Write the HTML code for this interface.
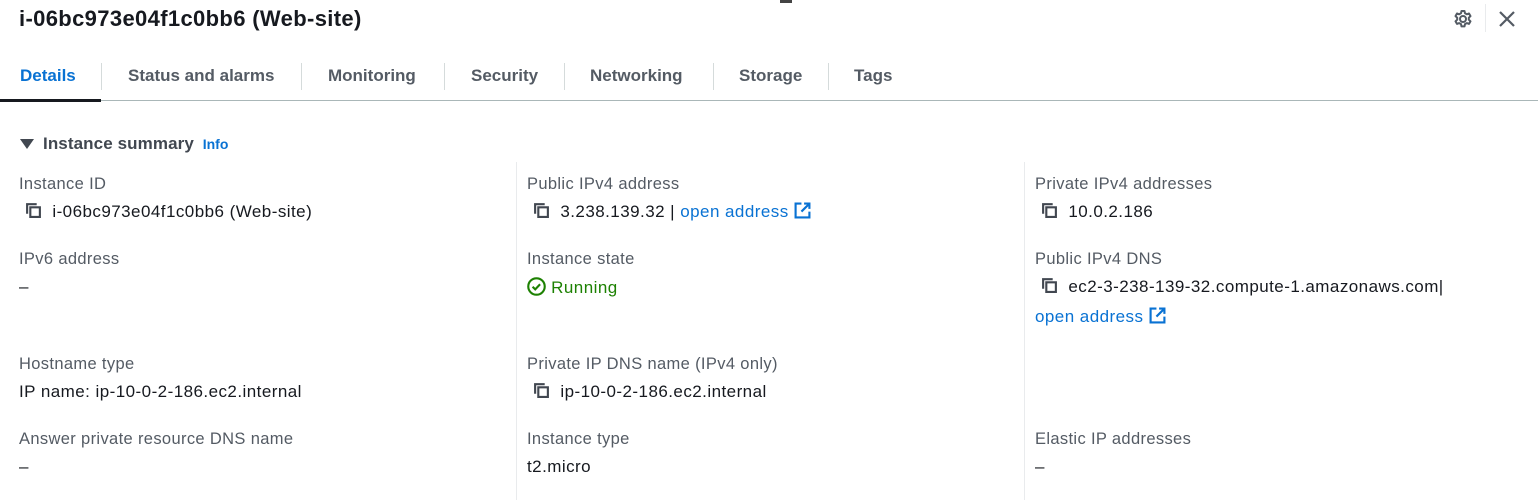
<!DOCTYPE html>
<html><head><meta charset="utf-8"><style>
body{margin:0;width:1538px;height:500px;background:#fff;font-family:"Liberation Sans",sans-serif;color:#16191f;position:relative;overflow:hidden}
.a{position:absolute;white-space:nowrap}
.lbl{font-size:16.5px;color:#545b64;letter-spacing:0.35px}
.val{font-size:17px;color:#16191f;letter-spacing:0.45px}
.tab{font-size:17px;font-weight:bold;color:#545b64;top:66px}
.sep{position:absolute;top:63px;width:1px;height:27px;background:#d5dbdb}
.vs{position:absolute;top:162px;width:1px;height:338px;background:#e9ebed}
.link{color:#0972d3}
svg{vertical-align:-2px}
</style></head><body>
<div class="a" style="left:780px;top:0;width:12px;height:3px;background:#444"></div>
<div class="a" style="left:19px;top:6px;font-size:22px;font-weight:bold;letter-spacing:0.35px">i-06bc973e04f1c0bb6 (Web-site)</div>
<svg class="a" style="left:1453px;top:9px" width="20" height="20" viewBox="0 0 20 20"><circle cx="10" cy="10" r="3" fill="none" stroke="#545b64" stroke-width="2"/><path d="M8.5 2h3l.5 2.3 1.8 1 2.2-.8 1.5 2.6-1.7 1.6v2l1.7 1.6-1.5 2.6-2.2-.8-1.8 1-.5 2.3h-3l-.5-2.3-1.8-1-2.2.8-1.5-2.6 1.7-1.6v-2L2.5 7.1 4 4.5l2.2.8 1.8-1z" fill="none" stroke="#545b64" stroke-width="2" stroke-linejoin="round"/></svg>
<div class="a" style="left:1485px;top:4px;width:1px;height:28px;background:#e9ebed"></div>
<svg class="a" style="left:1497px;top:9px" width="20" height="20" viewBox="0 0 20 20"><path d="M3 3l14 14M17 3L3 17" stroke="#545b64" stroke-width="2.2"/></svg>
<div class="a tab" style="left:20px;color:#0972d3">Details</div>
<div class="sep" style="left:101px"></div>
<div class="a tab" style="left:128px">Status and alarms</div>
<div class="sep" style="left:301px"></div>
<div class="a tab" style="left:328px">Monitoring</div>
<div class="sep" style="left:444px"></div>
<div class="a tab" style="left:471px">Security</div>
<div class="sep" style="left:564px"></div>
<div class="a tab" style="left:590px">Networking</div>
<div class="sep" style="left:713px"></div>
<div class="a tab" style="left:739px">Storage</div>
<div class="sep" style="left:828px"></div>
<div class="a tab" style="left:854px">Tags</div>
<div class="a" style="left:0;top:100px;width:1538px;height:1px;background:#aab7b8"></div>
<div class="a" style="left:0;top:99px;width:101px;height:3px;background:#16191f"></div>
<svg class="a" style="left:20px;top:139px" width="14" height="11" viewBox="0 0 14 11"><path d="M0 0h14L7 10z" fill="#414750"/></svg>
<div class="a" style="left:43px;top:134px;font-size:17px;font-weight:bold;color:#414750;letter-spacing:0.1px">Instance summary <span style="font-size:14px;color:#0972d3;margin-left:4px;letter-spacing:0">Info</span></div>
<div class="vs" style="left:516px"></div><div class="vs" style="left:1024px"></div>
<svg width="0" height="0" style="position:absolute"><defs><symbol id="cp" viewBox="0 0 16 16"><path d="M5 5h9v9H5zM2 11V2h9" fill="none" stroke="#414750" stroke-width="2"/></symbol><symbol id="ex" viewBox="0 0 16 16"><path d="M7 1.5H1.5v13h13V9M9.5 1.5h5v5M14.5 1.5L7 9" fill="none" stroke="#0972d3" stroke-width="2"/></symbol></defs></svg>

<div class="a lbl" style="left:19px;top:175px">Instance ID</div>
<div class="a val" style="left:25px;top:202px"><svg width="17" height="17"><use href="#cp"/></svg>&nbsp; i-06bc973e04f1c0bb6 (Web-site)</div>
<div class="a lbl" style="left:19px;top:250px">IPv6 address</div>
<div class="a val" style="left:19px;top:277px">–</div>
<div class="a lbl" style="left:19px;top:355px">Hostname type</div>
<div class="a val" style="left:19px;top:382px">IP name: ip-10-0-2-186.ec2.internal</div>
<div class="a lbl" style="left:19px;top:430px">Answer private resource DNS name</div>
<div class="a val" style="left:19px;top:457px">–</div>

<div class="a lbl" style="left:527px;top:175px">Public IPv4 address</div>
<div class="a val" style="left:533px;top:202px"><svg width="17" height="17"><use href="#cp"/></svg>&nbsp; 3.238.139.32 | <span class="link">open address</span> <svg width="17" height="17"><use href="#ex"/></svg></div>
<div class="a lbl" style="left:527px;top:250px">Instance state</div>
<div class="a val" style="left:527px;top:277px;color:#1d8102"><svg width="19" height="19" viewBox="0 0 18 18" style="vertical-align:-3px"><circle cx="9" cy="9" r="7.8" fill="none" stroke="#1d8102" stroke-width="2"/><path d="M5.3 9.2l2.5 2.5 4.6-4.8" fill="none" stroke="#1d8102" stroke-width="2"/></svg> Running</div>
<div class="a lbl" style="left:527px;top:355px">Private IP DNS name (IPv4 only)</div>
<div class="a val" style="left:533px;top:382px"><svg width="17" height="17"><use href="#cp"/></svg>&nbsp; ip-10-0-2-186.ec2.internal</div>
<div class="a lbl" style="left:527px;top:430px">Instance type</div>
<div class="a val" style="left:527px;top:457px">t2.micro</div>

<div class="a lbl" style="left:1035px;top:175px">Private IPv4 addresses</div>
<div class="a val" style="left:1041px;top:202px"><svg width="17" height="17"><use href="#cp"/></svg>&nbsp; 10.0.2.186</div>
<div class="a lbl" style="left:1035px;top:250px">Public IPv4 DNS</div>
<div class="a val" style="left:1041px;top:277px"><svg width="17" height="17"><use href="#cp"/></svg>&nbsp; ec2-3-238-139-32.compute-1.amazonaws.com|</div>
<div class="a val" style="left:1035px;top:307px"><span class="link">open address</span> <svg width="17" height="17"><use href="#ex"/></svg></div>
<div class="a lbl" style="left:1035px;top:430px">Elastic IP addresses</div>
<div class="a val" style="left:1035px;top:457px">–</div>
</body></html>
